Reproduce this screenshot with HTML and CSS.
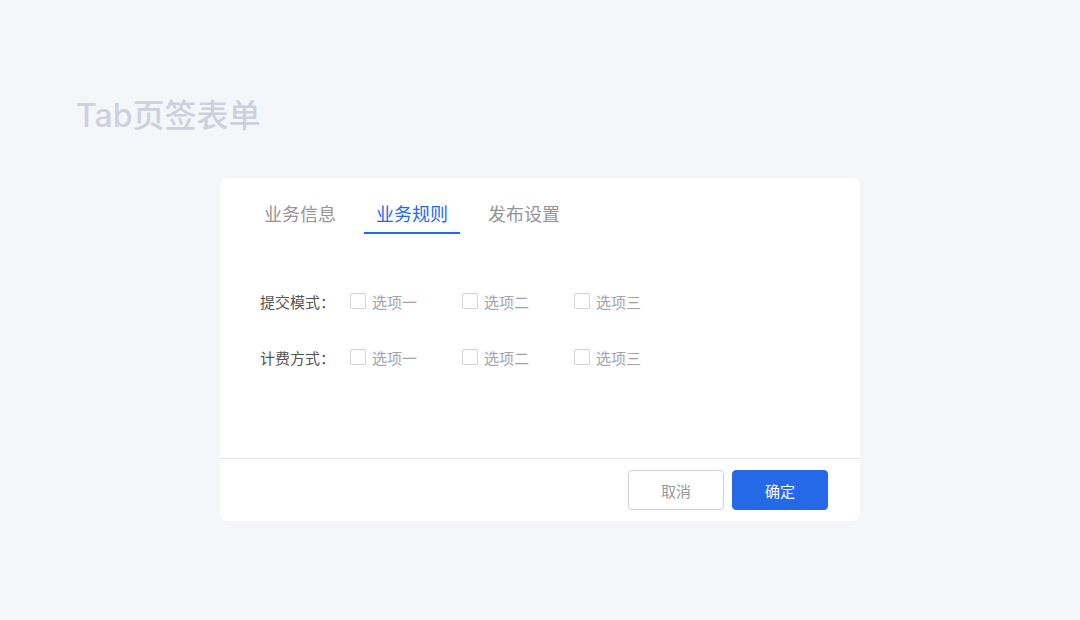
FILE: index.html
```html
<!DOCTYPE html>
<html lang="zh-CN">
  <head>
    <meta charset="UTF-8" />
    <meta name="viewport" content="width=device-width, initial-scale=1.0" />
    <title>Tab页签表单</title>
    <link rel="stylesheet" href="styles.css">
  </head>
  <body>
    <h1 class="page-title">Tab页签表单</h1>

    <div class="card">
      <div class="tabs">
        <div class="tab">业务信息</div>
        <div class="tab active">业务规则</div>
        <div class="tab">发布设置</div>
      </div>

      <div class="form">
        <div class="form-row">
          <span class="label">提交模式：</span>
          <label class="option"><span class="box"></span>选项一</label>
          <label class="option"><span class="box"></span>选项二</label>
          <label class="option"><span class="box"></span>选项三</label>
        </div>
        <div class="form-row">
          <span class="label">计费方式：</span>
          <label class="option"><span class="box"></span>选项一</label>
          <label class="option"><span class="box"></span>选项二</label>
          <label class="option"><span class="box"></span>选项三</label>
        </div>
      </div>

      <div class="footer">
        <button class="btn">取消</button>
        <button class="btn primary">确定</button>
      </div>
    </div>
  </body>
</html>
```

FILE: styles.css
```css
body {
  margin: 0;
  padding: 0;
  background: #f5f6fa;
  font-family: "Inter", "Noto Sans CJK SC", sans-serif;
  width: 1080px;
  height: 620px;
}
.page-title {
  margin: 0;
  padding: 95px 0 0 76px;
  box-sizing: border-box;
  height: 178px;
  font-size: 32px;
  font-weight: 500;
  line-height: 42px;
  color: #cdd1dd;
}
.card {
  width: 640px;
  height: 343px;
  margin-left: 220px;
  background: #fff;
  border-radius: 8px;
  display: flex;
  flex-direction: column;
}
.tabs {
  display: flex;
  gap: 16px;
  padding: 22px 0 0 32px;
  height: 56px;
  box-sizing: border-box;
}
.tab {
  width: 96px;
  height: 34px;
  box-sizing: border-box;
  padding-top: 2px;
  text-align: center;
  font-size: 18px;
  line-height: 26px;
  color: #959595;
}
.tab.active {
  color: #2569e8;
  border-bottom: 2px solid #2569e8;
}
.form {
  flex: 1;
  padding: 55px 0 0 40px;
  display: flex;
  flex-direction: column;
  gap: 32px;
}
.form-row {
  display: flex;
  align-items: center;
  height: 24px;
  font-size: 15px;
}
.label {
  width: 90px;
  color: #555;
}
.option {
  width: 112px;
  display: flex;
  align-items: center;
  color: #a3a3a3;
}
.box {
  width: 16px;
  height: 16px;
  box-sizing: border-box;
  border: 1px solid #cfd3dd;
  border-radius: 2px;
  margin-right: 6px;
}
.footer {
  border-top: 1px solid #e4e6ec;
  height: 63px;
  box-sizing: border-box;
  display: flex;
  justify-content: flex-end;
  align-items: flex-start;
  gap: 8px;
  padding: 11px 32px 0 0;
}
.btn {
  width: 96px;
  height: 40px;
  border: 1px solid #cdd1dc;
  border-radius: 4px;
  background: #fff;
  color: #999;
  font-family: inherit;
  font-size: 15px;
  cursor: pointer;
}
.btn.primary {
  background: #2569e8;
  border-color: #2569e8;
  color: #fff;
}
```
